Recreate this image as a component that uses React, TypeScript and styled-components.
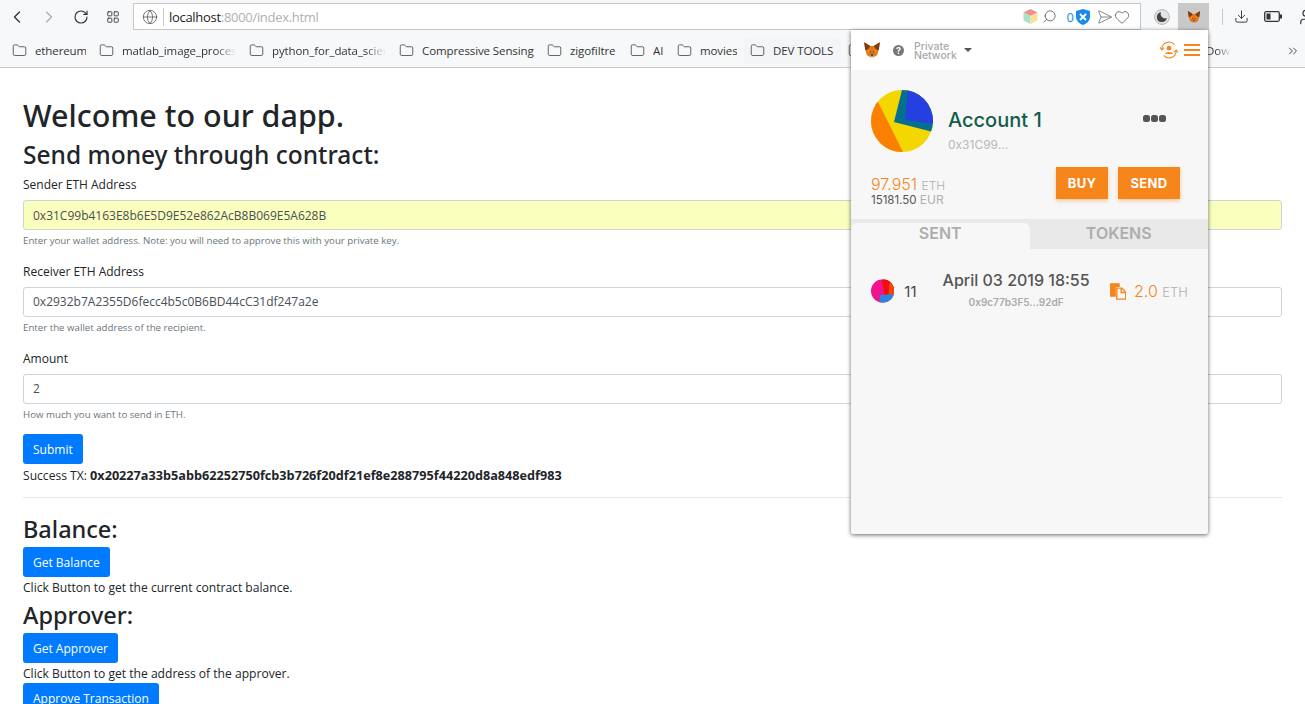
import {
  ChevronLeft,
  ChevronRight,
  ChevronsRight,
  Download,
  Folder,
  Globe,
  Heart,
  LayoutGrid,
  RotateCw,
  Search,
  Send,
  User,
} from "lucide-react";
import styled, { createGlobalStyle } from "styled-components";

const bookmarks = [
  { name: "ethereum", width: 51, faded: false, hovered: false },
  { name: "matlab_image_processing", width: 114, faded: true, hovered: false },
  { name: "python_for_data_science", width: 114, faded: true, hovered: false },
  { name: "Compressive Sensing", width: 112, faded: false, hovered: false },
  { name: "zigofiltre", width: 47, faded: false, hovered: false },
  { name: "AI", width: 11, faded: false, hovered: false },
  { name: "movies", width: 37, faded: false, hovered: false },
  { name: "DEV TOOLS", width: 62, faded: false, hovered: true },
  { name: "tutorials", width: 50, faded: false, hovered: false },
];

function Fox({ size }: { size: number }) {
  return (
    <svg width={size} height={size} viewBox="0 0 32 32">
      <polygon points="2,2 13,9 19,9 30,2 28,16 25,25 19,29 13,29 7,25 4,16" fill="#e2761b" />
      <polygon points="2,2 13,9 9,15 4,16" fill="#763d16" />
      <polygon points="30,2 19,9 23,15 28,16" fill="#763d16" />
      <polygon points="8,15 13,15 13,20 8,22" fill="#f6851b" />
      <polygon points="24,15 19,15 19,20 24,22" fill="#f6851b" />
      <polygon points="11,19 14,18 14,21" fill="#233447" />
      <polygon points="21,19 18,18 18,21" fill="#233447" />
      <polygon points="13,25 19,25 19,29 13,29" fill="#d7c1b3" />
      <polygon points="14,24 18,24 17,27 15,27" fill="#161616" />
    </svg>
  );
}

function BigIdenticon() {
  return (
    <svg width="62" height="62" viewBox="0 0 62 62">
      <clipPath id="big-clip">
        <circle cx="31" cy="31" r="31" />
      </clipPath>
      <g clipPath="url(#big-clip)">
        <rect width="62" height="62" fill="#f4d600" />
        <polygon points="7,12 32,62 0,62 0,12" fill="#fb7f00" />
        <polygon points="31,0 23,32 62,42 62,0" fill="#03708f" />
        <polygon points="37,0 34,30 62,34 62,0" fill="#2540e0" />
      </g>
    </svg>
  );
}

function SmallIdenticon() {
  return (
    <svg width="24" height="24" viewBox="0 0 24 24">
      <clipPath id="small-clip">
        <circle cx="12" cy="12" r="12" />
      </clipPath>
      <g clipPath="url(#small-clip)">
        <rect width="24" height="24" fill="#f0148c" />
        <polygon points="11,0 14,16 24,15 24,0" fill="#f50c0c" />
        <polygon points="19,4 24,4 24,15 18,16" fill="#f24a05" />
        <polygon points="9,16 24,15 24,24 9,24" fill="#2a86dc" />
      </g>
    </svg>
  );
}

function AccountSwitch() {
  return (
    <svg width="18" height="18" viewBox="0 0 20 20" fill="none" stroke="#f6851b" strokeWidth="1.2">
      <path d="M2 9 A8 8 0 0 1 16 4" />
      <path d="M18 11 A8 8 0 0 1 4 16" />
      <path d="M0 7 L2 10 L4.5 7.5" />
      <path d="M20 13 L18 10 L15.5 12.5" />
      <circle cx="10" cy="8" r="2.6" fill="#f6851b" stroke="none" />
      <path d="M5.5 14.5 C6 11.5 14 11.5 14.5 14.5 Z" fill="#f6851b" stroke="none" />
    </svg>
  );
}

function CopyDoc() {
  return (
    <svg width="17" height="18" viewBox="0 0 17 18">
      <path d="M0 1 H10 V5 H6 V15 H0 Z" fill="#f6851b" />
      <path d="M7 6 H12 L16.2 10 V17.4 H7 Z" fill="#f7f7f7" stroke="#f6851b" strokeWidth="1.4" />
      <path d="M11.5 6 V10.5 H16" fill="none" stroke="#f6851b" strokeWidth="1.4" />
    </svg>
  );
}

function Cube() {
  return (
    <svg width="15" height="15" viewBox="0 0 15 15">
      <polygon points="7.5,0 14.5,3.5 7.5,7 0.5,3.5" fill="#f08f8f" />
      <polygon points="0.5,3.5 7.5,7 7.5,15 0.5,11.5" fill="#a9e2c6" />
      <polygon points="14.5,3.5 7.5,7 7.5,15 14.5,11.5" fill="#f6e39a" />
    </svg>
  );
}

function Shield() {
  return (
    <svg width="14" height="16" viewBox="0 0 14 16">
      <path d="M7 0 L14 2 V8 C14 12 10 15 7 16 C4 15 0 12 0 8 V2 Z" fill="#1a8be8" />
      <path d="M4 5 L10 11 M10 5 L4 11" stroke="#fff" strokeWidth="1.8" />
    </svg>
  );
}

function Moon() {
  return (
    <svg width="16" height="16" viewBox="0 0 16 16">
      <circle cx="8" cy="8" r="7.4" fill="#e4e4e4" stroke="#b5b5b5" />
      <path d="M7 3.2 A5 5 0 1 0 12.8 9 A4.4 4.4 0 0 1 7 3.2 Z" fill="#444" />
    </svg>
  );
}

function Battery() {
  return (
    <svg width="18" height="11" viewBox="0 0 18 11" fill="none" stroke="#333" strokeWidth="1.3">
      <rect x="0.7" y="0.7" width="14.6" height="9.6" rx="1.5" />
      <rect x="2.5" y="2.5" width="4" height="6" fill="#333" stroke="none" />
      <rect x="16" y="3.5" width="2" height="4" fill="#333" stroke="none" />
    </svg>
  );
}

export default function App() {
  return (
    <>
      <GlobalStyle />
      <Toolbar>
        <NavIcons>
          <NavSlot>
            <ChevronLeft size={20} strokeWidth={1.6} color="#333" />
          </NavSlot>
          <NavSlot>
            <ChevronRight size={20} strokeWidth={1.4} color="#aaa" />
          </NavSlot>
          <NavSlot>
            <RotateCw size={16} strokeWidth={1.7} color="#333" />
          </NavSlot>
          <NavSlot>
            <LayoutGrid size={14} strokeWidth={1.5} color="#333" />
          </NavSlot>
        </NavIcons>
        <AddressBar>
          <Globe size={16} strokeWidth={1.2} color="#555" />
          <AddressText>
            localhost<span>:8000/index.html</span>
          </AddressText>
          <AddressActions>
            <Cube />
            <Search size={15} strokeWidth={1.3} color="#555" style={{ transform: "scaleX(-1)" }} />
            <ShieldCount>
              0<Shield />
            </ShieldCount>
            <Send size={16} strokeWidth={1.2} color="#777" style={{ transform: "rotate(45deg)" }} />
            <Heart size={16} strokeWidth={1.2} color="#555" />
          </AddressActions>
        </AddressBar>
        <ExtensionIcons>
          <Moon />
          <FoxTile>
            <Fox size={14} />
          </FoxTile>
          <ToolbarDivider />
          <UtilityIcons>
            <Download size={15} strokeWidth={1.5} color="#333" />
            <Battery />
            <User size={18} strokeWidth={1.5} color="#333" />
          </UtilityIcons>
        </ExtensionIcons>
      </Toolbar>
      <BookmarksBar>
        {bookmarks.map((b) => (
          <Bookmark key={b.name} $hovered={b.hovered}>
            <Folder size={15} strokeWidth={1.3} color="#444" />
            <BookmarkLabel $width={b.width} $faded={b.faded}>
              {b.name}
            </BookmarkLabel>
          </Bookmark>
        ))}
        <Overflow>
          <OverflowLabel>Dow</OverflowLabel>
          <ChevronsRight size={14} strokeWidth={1.5} color="#333" />
        </Overflow>
      </BookmarksBar>
      <Page>
        <Title>Welcome to our dapp.</Title>
        <SendHeading>Send money through contract:</SendHeading>
        <Field>
          <FieldLabel>Sender ETH Address</FieldLabel>
          <Input $autofilled readOnly value="0x31C99b4163E8b6E5D9E52e862AcB8B069E5A628B" />
          <Help>Enter your wallet address. Note: you will need to approve this with your private key.</Help>
        </Field>
        <Field>
          <FieldLabel>Receiver ETH Address</FieldLabel>
          <Input readOnly value="0x2932b7A2355D6fecc4b5c0B6BD44cC31df247a2e" />
          <Help>Enter the wallet address of the recipient.</Help>
        </Field>
        <Field>
          <FieldLabel>Amount</FieldLabel>
          <Input readOnly value="2" />
          <Help>How much you want to send in ETH.</Help>
        </Field>
        <Button>Submit</Button>
        <Line>
          Success TX: <strong>0x20227a33b5abb62252750fcb3b726f20df21ef8e288795f44220d8a848edf983</strong>
        </Line>
        <Rule />
        <SectionHeading>Balance:</SectionHeading>
        <Button>Get Balance</Button>
        <Line>Click Button to get the current contract balance.</Line>
        <SectionHeading>Approver:</SectionHeading>
        <Button>Get Approver</Button>
        <Line>Click Button to get the address of the approver.</Line>
        <Button>Approve Transaction</Button>
      </Page>

      <Popup>
        <PopupHeader>
          <Fox size={18} />
          <HelpDot>?</HelpDot>
          <NetworkName>
            Private
            <br />
            Network
          </NetworkName>
          <Caret />
          <HeaderRight>
            <AccountSwitch />
            <Burger>
              <span />
              <span />
              <span />
            </Burger>
          </HeaderRight>
        </PopupHeader>
        <AccountArea>
          <AccountRow>
            <BigIdenticon />
            <AccountInfo>
              <AccountName>Account 1</AccountName>
              <AccountAddress>0x31C99...</AccountAddress>
            </AccountInfo>
            <Dots>
              <i />
              <i />
              <i />
            </Dots>
          </AccountRow>
          <BalanceRow>
            <Balances>
              <EthAmount>
                97.951 <Unit>ETH</Unit>
              </EthAmount>
              <EurAmount>
                15181.50 <Unit>EUR</Unit>
              </EurAmount>
            </Balances>
            <ActionButton $width={52}>BUY</ActionButton>
            <ActionButton $width={62}>SEND</ActionButton>
          </BalanceRow>
        </AccountArea>
        <Tabs>
          <Tab $active>SENT</Tab>
          <Tab>TOKENS</Tab>
        </Tabs>
        <TxRow>
          <SmallIdenticon />
          <TxNonce>11</TxNonce>
          <TxMiddle>
            <TxDate>April 03 2019 18:55</TxDate>
            <TxHash>0x9c77b3F5...92dF</TxHash>
          </TxMiddle>
          <CopyDoc />
          <TxAmount>
            2.0 <TxUnit>ETH</TxUnit>
          </TxAmount>
        </TxRow>
      </Popup>
    </>
  );
}

const GlobalStyle = createGlobalStyle`
  html, body {
    margin: 0;
    height: 704px;
    overflow: hidden;
    background: #fff;
    color: #212529;
    font-family: "Open Sans", "Noto Sans", sans-serif;
  }
  * {
    box-sizing: border-box;
  }
`;

const Toolbar = styled.div`
  display: flex;
  align-items: center;
  height: 34px;
  padding: 3px 0 4px 1px;
  background: #f7f8fa;
`;

const NavIcons = styled.div`
  display: flex;
  flex-shrink: 0;
  align-items: center;
  margin-right: 4px;
`;

const NavSlot = styled.div`
  display: flex;
  align-items: center;
  justify-content: center;
  width: 32px;
  height: 20px;
`;

const AddressBar = styled.div`
  display: flex;
  flex-shrink: 0;
  align-items: center;
  gap: 5px;
  width: 1008px;
  height: 27px;
  padding-left: 8px;
  background: #fff;
  border: 1px solid #c6c8ca;
`;

const AddressText = styled.div`
  border-left: 1px solid #c6c8ca;
  padding-left: 5px;
  font-size: 13px;
  letter-spacing: -0.3px;
  line-height: 18px;
  color: #222;
  span {
    color: #b0b0b0;
  }
`;

const AddressActions = styled.div`
  display: flex;
  align-items: center;
  gap: 4px;
  margin-left: auto;
  padding-right: 10px;
`;

const ShieldCount = styled.div`
  display: flex;
  align-items: center;
  gap: 2px;
  margin-left: 6px;
  font-size: 13px;
  color: #1a8be8;
`;

const ExtensionIcons = styled.div`
  display: flex;
  flex-shrink: 0;
  align-items: center;
  gap: 8px;
  height: 28px;
  margin-left: 13px;
`;

const FoxTile = styled.div`
  display: flex;
  align-items: center;
  justify-content: center;
  width: 31px;
  height: 28px;
  background: #c9c9c9;
`;

const ToolbarDivider = styled.div`
  width: 1px;
  height: 16px;
  margin-left: 5px;
  background: #c6c8ca;
`;

const UtilityIcons = styled.div`
  display: flex;
  align-items: center;
  gap: 15px;
  margin-left: 3px;
`;

const BookmarksBar = styled.div`
  display: flex;
  align-items: center;
  gap: 13px;
  height: 34px;
  padding: 0 5px 0 12px;
  background: #f7f8fa;
  border-bottom: 1px solid #c9cbcd;
`;

const Bookmark = styled.div<{ $hovered: boolean }>`
  display: flex;
  flex-shrink: 0;
  align-items: center;
  gap: 8px;
  ${(p) => p.$hovered && "background: #f4f5f7; box-shadow: 0 0 0 6px #f4f5f7; border-radius: 1px;"}
`;

const BookmarkLabel = styled.div<{ $width: number; $faded: boolean }>`
  width: ${(p) => p.$width}px;
  overflow: hidden;
  white-space: nowrap;
  font-size: 11.5px;
  letter-spacing: -0.1px;
  color: #333;
  ${(p) => p.$faded && "mask-image: linear-gradient(to right, #000 82%, transparent);"}
`;

const Overflow = styled.div`
  display: flex;
  flex-shrink: 0;
  align-items: center;
  gap: 55px;
  margin-left: auto;
`;

const OverflowLabel = styled.div`
  width: 25px;
  overflow: hidden;
  white-space: nowrap;
  font-size: 11.5px;
  color: #333;
  mask-image: linear-gradient(to right, #000 40%, transparent);
`;

const Page = styled.main`
  display: flex;
  flex-direction: column;
  align-items: flex-start;
  padding: 26px 23px 0;
`;

const Title = styled.h1`
  margin: 0;
  font-family: "Noto Sans", "Open Sans", sans-serif;
  font-size: 30.5px;
  line-height: 42px;
  font-weight: 500;
`;

const SendHeading = styled.h2`
  margin: 0;
  font-family: "Noto Sans", "Open Sans", sans-serif;
  font-size: 24.5px;
  line-height: 38px;
  font-weight: 500;
`;

const Field = styled.div`
  width: 100%;
  margin-bottom: 12.8px;
`;

const FieldLabel = styled.label`
  display: block;
  margin: 0 0 5px;
  font-size: 12px;
  line-height: 21px;
`;

const Input = styled.input<{ $autofilled?: boolean }>`
  display: block;
  width: 100%;
  height: 30px;
  padding: 0 9px;
  border: 1px solid #ced4da;
  border-radius: 3px;
  font: inherit;
  font-size: 12px;
  color: #495057;
  background: ${(p) => (p.$autofilled ? "#faffbd" : "#fff")};
`;

const Help = styled.small`
  display: block;
  margin-top: 4px;
  font-size: 9.7px;
  line-height: 14px;
  color: #6c757d;
`;

const Button = styled.button`
  flex-shrink: 0;
  height: 30px;
  padding: 0 10px;
  border: none;
  border-radius: 3px;
  background: #007bff;
  color: #fff;
  font: inherit;
  font-size: 12px;
`;

const Line = styled.div`
  padding-top: 2px;
  font-size: 12.1px;
  line-height: 18px;
  strong {
    font-size: 12.68px;
  }
`;

const Rule = styled.hr`
  width: 100%;
  margin: 12px 0 13px;
  border: 0;
  border-top: 1px solid #e6e7e8;
`;

const SectionHeading = styled.h3`
  margin: 0;
  font-family: "Noto Sans", "Open Sans", sans-serif;
  font-size: 23.5px;
  line-height: 36px;
  font-weight: 500;
`;

const Popup = styled.div`
  position: absolute;
  left: 851px;
  top: 30px;
  width: 357px;
  height: 504px;
  background: #f7f7f7;
  border-radius: 2px;
  box-shadow: 0 1px 4px rgba(0, 0, 0, 0.6);
  font-family: "Inter", "Noto Sans", sans-serif;
`;

const PopupHeader = styled.div`
  display: flex;
  align-items: center;
  height: 40px;
  padding: 0 8px 0 12px;
  background: #fff;
`;

const HelpDot = styled.div`
  width: 11px;
  height: 11px;
  margin-left: 12px;
  border-radius: 50%;
  background: #777;
  color: #fff;
  font-size: 9px;
  font-weight: 700;
  line-height: 11px;
  text-align: center;
`;

const NetworkName = styled.div`
  margin: 2px 0 0 10px;
  font-size: 10.5px;
  line-height: 9px;
  font-weight: 500;
  color: #a9a9a9;
`;

const Caret = styled.div`
  width: 0;
  height: 0;
  margin-left: 7px;
  border: 4px solid transparent;
  border-top: 4px solid #555;
  border-bottom: 0;
`;

const HeaderRight = styled.div`
  display: flex;
  align-items: center;
  gap: 6px;
  margin-left: auto;
`;

const Burger = styled.div`
  display: flex;
  flex-direction: column;
  gap: 3px;
  span {
    display: block;
    width: 16px;
    height: 2px;
    background: #f6851b;
  }
`;

const AccountArea = styled.div`
  height: 149px;
  padding: 20px 28px 0 20px;
`;

const AccountRow = styled.div`
  display: flex;
  align-items: center;
  height: 62px;
`;

const AccountInfo = styled.div`
  margin: 18px 0 0 15px;
`;

const AccountName = styled.div`
  font-size: 20px;
  font-weight: 500;
  line-height: 24px;
  color: #135c4c;
`;

const AccountAddress = styled.div`
  margin-top: 5px;
  font-size: 12px;
  line-height: 16px;
  color: #b8b8b8;
`;

const Dots = styled.div`
  display: flex;
  gap: 1px;
  margin: 0 14px 5px auto;
  i {
    display: block;
    width: 7px;
    height: 7px;
    border-radius: 2.5px;
    background: #555;
  }
`;

const BalanceRow = styled.div`
  display: flex;
  align-items: flex-start;
  gap: 10px;
  margin-top: 15px;
`;

const Balances = styled.div`
  margin: 10px auto 0 0;
`;

const EthAmount = styled.div`
  font-size: 16px;
  line-height: 14px;
  font-weight: 300;
  color: #f6851b;
`;

const EurAmount = styled.div`
  font-size: 11.5px;
  line-height: 13px;
  color: #555;
`;

const Unit = styled.span`
  font-size: 12px;
  color: #b0b0b0;
`;

const ActionButton = styled.button<{ $width: number }>`
  width: ${(p) => p.$width}px;
  height: 32px;
  padding: 0;
  border: none;
  background: #f6851b;
  color: #fff;
  font: inherit;
  font-size: 13px;
  font-weight: 700;
  letter-spacing: 0.3px;
  box-shadow: 0 2px 4px rgba(246, 133, 27, 0.4);
`;

const Tabs = styled.div`
  display: flex;
  height: 30px;
  padding-top: 4px;
  background: #e9e9e9;
`;

const Tab = styled.div<{ $active?: boolean }>`
  flex: 1;
  text-align: center;
  font-size: 16px;
  font-weight: 600;
  line-height: 20px;
  color: #adadad;
  border-radius: 6px 6px 0 0;
  background: ${(p) => (p.$active ? "#f7f7f7" : "#e9e9e9")};
`;

const TxRow = styled.div`
  display: flex;
  align-items: center;
  height: 84px;
  padding: 0 20px;
`;

const TxNonce = styled.div`
  width: 24px;
  margin-left: 10px;
  font-size: 15px;
  color: #444;
`;

const TxMiddle = styled.div`
  width: 182px;
  margin-right: 5px;
  text-align: center;
`;

const TxDate = styled.div`
  font-size: 16px;
  font-weight: 500;
  line-height: 22px;
  color: #555;
`;

const TxHash = styled.div`
  font-size: 10px;
  font-weight: 600;
  line-height: 22px;
  color: #aaa;
`;

const TxAmount = styled.div`
  margin-left: 8px;
  font-size: 16px;
  font-weight: 300;
  color: #f6851b;
  white-space: nowrap;
`;

const TxUnit = styled.span`
  font-size: 13px;
  color: #b0b0b0;
`;
